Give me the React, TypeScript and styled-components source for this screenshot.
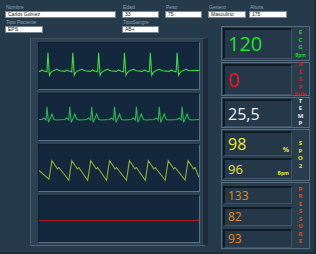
import React from 'react';
import styled, { createGlobalStyle } from 'styled-components';

const GlobalStyle = createGlobalStyle`
  html, body {
    margin: 0;
    padding: 0;
    background: #253a4a;
  }
  body {
    font-family: "Liberation Sans", Arial, sans-serif;
  }
`;

// beat positions are read off the monitor trace, x inside a 161px row
const ecgBeats = [9, 34, 60, 86, 112, 139];
const ecg2Beats = [8, 31, 53, 76, 98, 121, 144];
const plethPeaks = [13, 33, 52, 71, 91, 110, 130, 150];

function ecgPath(beats: number[]) {
  let d = 'M0,29';
  beats.forEach((s) => {
    d += ` L${s - 8},29 L${s - 6},27.5 L${s - 4},28.5 L${s - 1},29.5 L${s},10 L${s + 1.5},33 L${s + 3},30 L${s + 6},28 L${s + 9},26.8 L${s + 12},28.3`;
  });
  return d + ' L161,28';
}

function ecg2Path(beats: number[]) {
  let d = 'M0,26';
  beats.forEach((s) => {
    d += ` L${s - 5},26 L${s - 3},24.5 L${s - 1},26.5 L${s},13 L${s + 1.5},29 L${s + 3},25.5 L${s + 5},20.5 L${s + 7},26 L${s + 10},26.5`;
  });
  return d + ' L161,26';
}

function plethPath(peaks: number[]) {
  let d = 'M0,26 L10,35';
  peaks.forEach((p, i) => {
    const next = peaks[i + 1];
    const end = next ? next - 3 : 161;
    const endY = next ? 36 : 33;
    d += ` L${p},16 L${p + 4},22 L${p + 5.5},24.5 L${p + 7},23 L${end},${endY}`;
  });
  return d;
}

interface FieldProps {
  label: string;
  value: string;
  width: number;
}

function Field({ label, value, width }: FieldProps) {
  return (
    <FieldBox $w={width}>
      <Label>{label}</Label>
      <InputBox>{value}</InputBox>
    </FieldBox>
  );
}

interface VitalCardProps {
  letters: string[];
  unit?: string;
  tone: string;
  height: number;
  top?: number;
  gap?: number;
  children: React.ReactNode;
}

function VitalCard({ letters, unit, tone, height, top = 1, gap = 2, children }: VitalCardProps) {
  return (
    <Card $h={height}>
      <Displays $top={top} $gap={gap}>
        {children}
      </Displays>
      <Letters $c={tone}>
        {letters.map((l, i) => (
          <span key={i}>{l}</span>
        ))}
        {unit && <Unit>{unit}</Unit>}
      </Letters>
    </Card>
  );
}

export default function App() {
  return (
    <Page>
      <GlobalStyle />
      <TopRow>
        <Field label="Nombre" value="Carlos Gomez" width={111} />
        <Field label="Edad" value="33" width={37} />
        <Field label="Peso" value="75" width={37} />
        <Field label="Genero" value="Masculino" width={38} />
        <Field label="Altura" value="175" width={38} />
      </TopRow>
      <Body>
        <LeftSide>
          <SecondRow>
            <Field label="Tipo Paciente" value="EPS" width={38} />
            <Field label="TipoSangre" value="AB+" width={37} />
          </SecondRow>
          <WavePanel>
            <WaveRow>
              <WaveSvg viewBox="0 0 161 47" preserveAspectRatio="none">
                <path d={ecgPath(ecgBeats)} stroke="#3fdc3f" strokeWidth="1.1" fill="none" />
              </WaveSvg>
            </WaveRow>
            <WaveRow>
              <WaveSvg viewBox="0 0 161 47" preserveAspectRatio="none">
                <path d={ecg2Path(ecg2Beats)} stroke="#2bb54c" strokeWidth="1.1" fill="none" />
              </WaveSvg>
            </WaveRow>
            <WaveRow>
              <WaveSvg viewBox="0 0 161 47" preserveAspectRatio="none">
                <path d={plethPath(plethPeaks)} stroke="#8eae36" strokeWidth="1.1" fill="none" />
              </WaveSvg>
            </WaveRow>
            <WaveRow>
              <WaveSvg viewBox="0 0 161 47" preserveAspectRatio="none">
                <path d="M0,25 L161,25" stroke="#b01c26" strokeWidth="1.2" fill="none" />
              </WaveSvg>
            </WaveRow>
          </WavePanel>
        </LeftSide>
        <RightSide>
          <VitalCard letters={['E', 'C', 'G']} unit="Bpm" tone="#22d322" height={35}>
            <Display $h={31}>
              <Value $c="#22e022" $size={20}>120</Value>
            </Display>
          </VitalCard>
          <VitalCard letters={['R', 'E', 'S', 'P']} unit="Ratio" tone="#e01818" height={34}>
            <Display $h={31}>
              <Value $c="#ee1111" $size={20}>0</Value>
            </Display>
          </VitalCard>
          <VitalCard letters={['T', 'E', 'M', 'P']} tone="#e8e8e8" height={31}>
            <Display $h={28}>
              <Value $c="#ececec" $size={16}>25,5</Value>
            </Display>
          </VitalCard>
          <VitalCard letters={['S', 'P', 'O', '2']} tone="#e4e436" height={52}>
            <Display $h={25}>
              <Value $c="#eaea3a" $size={16}>98</Value>
              <Suffix $c="#e4e436" $size={7}>%</Suffix>
            </Display>
            <Display $h={21}>
              <Value $c="#eaea3a" $size={13}>96</Value>
              <Suffix $c="#e4e436" $size={5}>Bpm</Suffix>
            </Display>
          </VitalCard>
          <VitalCard
            letters={['P', 'R', 'E', 'S', 'S', 'U', 'R', 'E']}
            tone="#e2521a"
            height={67}
            top={3}
            gap={3}
          >
            <Display $h={18}>
              <Value $c="#e28a1e" $size={12}>133</Value>
            </Display>
            <Display $h={19}>
              <Value $c="#e28a1e" $size={12}>82</Value>
            </Display>
            <Display $h={19}>
              <Value $c="#e28a1e" $size={12}>93</Value>
            </Display>
          </VitalCard>
        </RightSide>
      </Body>
    </Page>
  );
}

const Page = styled.div`
  width: 316px;
  height: 254px;
  box-sizing: border-box;
  background: #253a4a;
  border-right: 2px solid #1e2f3c;
  border-bottom: 2px solid #1e2f3c;
  overflow: hidden;
  display: flex;
  flex-direction: column;
`;

const TopRow = styled.div`
  display: grid;
  grid-template-columns: 117px 43px 43px 41px 40px;
  padding: 3px 0 0 5px;
`;

const SecondRow = styled.div`
  display: grid;
  grid-template-columns: 117px 43px;
  padding-left: 5px;
`;

const FieldBox = styled.div<{ $w: number }>`
  display: flex;
  flex-direction: column;
  width: ${(p) => p.$w}px;
`;

const Label = styled.span`
  height: 8px;
  font-size: 5px;
  line-height: 8px;
  color: #93a3b0;
  padding-left: 1px;
  white-space: nowrap;
`;

const InputBox = styled.div`
  height: 7px;
  box-sizing: border-box;
  background: #ffffff;
  border: 1px solid #76858f;
  padding-left: 2px;
  font-size: 5px;
  line-height: 5px;
  color: #111;
  white-space: nowrap;
  overflow: hidden;
`;

const Body = styled.div`
  display: flex;
`;

const LeftSide = styled.div`
  width: 215px;
  display: flex;
  flex-direction: column;
`;

const WavePanel = styled.div`
  margin: 5px 0 0 30px;
  width: 178px;
  height: 208px;
  box-sizing: border-box;
  background: #2c4253;
  border-left: 1px solid #4a6072;
  border-top: 1px solid #3b5062;
  border-right: 5px solid #1b2a36;
  border-bottom: 1px solid #4d6476;
  padding: 3px 3px 2px 7px;
  display: flex;
  flex-direction: column;
  gap: 3px;
`;

const WaveRow = styled.div`
  height: 48px;
  box-sizing: border-box;
  background: #14283d;
  border-top: 1px solid #0f1d2b;
  border-left: 1px solid #0f1d2b;
  border-right: 1px solid #5a7184;
  border-bottom: 1px solid #5a7184;
`;

const WaveSvg = styled.svg`
  display: block;
  width: 100%;
  height: 100%;
`;

const RightSide = styled.div`
  margin: 8px 0 0 6px;
  width: 89px;
  display: flex;
  flex-direction: column;
  gap: 1px;
`;

const Card = styled.div<{ $h: number }>`
  height: ${(p) => p.$h}px;
  box-sizing: border-box;
  border: 1px solid #566c7e;
  background: #283d4e;
  display: flex;
`;

const Displays = styled.div<{ $top: number; $gap: number }>`
  width: 69px;
  padding: ${(p) => p.$top}px 0 0 1px;
  display: flex;
  flex-direction: column;
  gap: ${(p) => p.$gap}px;
`;

const Display = styled.div<{ $h: number }>`
  position: relative;
  height: ${(p) => p.$h}px;
  box-sizing: border-box;
  background: #24384a;
  border-top: 2px solid #0f1a24;
  border-left: 2px solid #0f1a24;
  border-right: 1px solid #3f5567;
  border-bottom: 1px solid #3f5567;
  padding-left: 3px;
  display: flex;
  align-items: center;
`;

const Value = styled.span<{ $c: string; $size: number }>`
  font-family: "Open Sans", "Noto Sans", sans-serif;
  font-size: ${(p) => p.$size}px;
  line-height: 1;
  color: ${(p) => p.$c};
`;

const Suffix = styled.span<{ $c: string; $size: number }>`
  position: absolute;
  right: 2px;
  bottom: 2px;
  font-family: "Open Sans", "Noto Sans", sans-serif;
  font-weight: 700;
  font-size: ${(p) => p.$size}px;
  line-height: 1;
  color: ${(p) => p.$c};
`;

const Letters = styled.div<{ $c: string }>`
  flex: 1;
  display: flex;
  flex-direction: column;
  align-items: center;
  justify-content: center;
  font-family: "Open Sans", "Noto Sans", sans-serif;
  font-weight: 700;
  font-size: 6px;
  line-height: 7.5px;
  color: ${(p) => p.$c};
`;

const Unit = styled.span`
  font-size: 4.5px;
  line-height: 6px;
`;
